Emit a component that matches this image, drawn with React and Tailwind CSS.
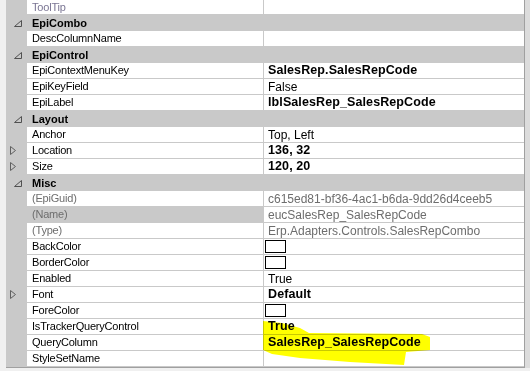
import React from 'react';

// rows of the property grid, top to bottom
const rows = [
  { name: 'ToolTip', value: '', nameClass: 'text-[#7b7694]', first: true },
  { cat: 'EpiCombo' },
  { name: 'DescColumnName', value: '' },
  { cat: 'EpiControl' },
  { name: 'EpiContextMenuKey', value: 'SalesRep.SalesRepCode', bold: true },
  { name: 'EpiKeyField', value: 'False' },
  { name: 'EpiLabel', value: 'lblSalesRep_SalesRepCode', bold: true },
  { cat: 'Layout' },
  { name: 'Anchor', value: 'Top, Left' },
  { name: 'Location', value: '136, 32', bold: true, expand: true },
  { name: 'Size', value: '120, 20', bold: true, expand: true },
  { cat: 'Misc' },
  { name: '(EpiGuid)', value: 'c615ed81-bf36-4ac1-b6da-9dd26d4ceeb5', grey: true },
  { name: '(Name)', value: 'eucSalesRep_SalesRepCode', grey: true, selected: true },
  { name: '(Type)', value: 'Erp.Adapters.Controls.SalesRepCombo', grey: true },
  { name: 'BackColor', swatch: true },
  { name: 'BorderColor', swatch: true },
  { name: 'Enabled', value: 'True' },
  { name: 'Font', value: 'Default', bold: true, expand: true },
  { name: 'ForeColor', swatch: true },
  { name: 'IsTrackerQueryControl', value: 'True', bold: true },
  { name: 'QueryColumn', value: 'SalesRep_SalesRepCode', bold: true },
  { name: 'StyleSetName', value: '' },
];

const Expanded = () => (
  <svg width="8" height="7" viewBox="0 0 8 7" className="ml-[8px]">
    <path d="M0.5 6.5 L7.5 6.5 L7.5 0.5 Z" fill="none" stroke="#505050" strokeWidth="1" />
  </svg>
);

const Collapsed = () => (
  <svg width="6" height="9" viewBox="0 0 6 9" className="ml-[4px]">
    <path d="M0.5 0.5 L5.5 4.5 L0.5 8.5 Z" fill="none" stroke="#606060" strokeWidth="1" />
  </svg>
);

const CategoryRow = ({ label }) => (
  <div className="flex h-[16px] items-center bg-[#c9c9c9]">
    <div className="flex w-[21px] items-center">
      <Expanded />
    </div>
    <span className="pl-[5px] text-[11px] font-bold text-black">{label}</span>
  </div>
);

const PropRow = ({ row }) => {
  const nameColor = row.nameClass || (row.grey ? 'text-[#6d6d6d]' : 'text-black');
  return (
    <div className={`flex ${row.first ? 'h-[15px]' : 'h-[16px]'} border-b border-[#c9c9c9]`}>
      <div className="flex w-[21px] items-center bg-[#c9c9c9]">
        {row.expand && <Collapsed />}
      </div>
      <div
        className={`flex w-[236px] items-center pl-[5px] text-[11px] tracking-[-0.2px] ${nameColor} ${
          row.selected ? 'bg-[#c9c9c9]' : 'bg-white'
        }`}
      >
        {row.name}
      </div>
      <div className="w-px bg-[#c9c9c9]" />
      <div
        className={`flex w-[260px] items-center bg-white pl-[4px] ${
          row.bold
            ? 'text-[12.5px] font-bold tracking-[0.1px] text-black'
            : row.grey
            ? 'text-[12px] text-[#6d6d6d]'
            : 'text-[12px] text-black'
        }`}
      >
        {row.swatch ? (
          <div className="ml-[-3px] h-[13px] w-[21px] border border-black bg-white" />
        ) : (
          row.value
        )}
      </div>
    </div>
  );
};

export default function App() {
  return (
    <div
      className="relative h-[371px] w-[530px] overflow-hidden bg-[#f0f0f0]"
      style={{ fontFamily: '"Liberation Sans", Arial, sans-serif' }}
    >
      <div className="flex">
        <div className="w-[6px]" />
        <div className="w-[519px] border-r border-b border-[#a0a0a0]">
          {rows.map((row, i) =>
            row.cat ? <CategoryRow key={i} label={row.cat} /> : <PropRow key={i} row={row} />
          )}
        </div>
        <div className="w-[5px] bg-[#dcdcdc]" />
      </div>

      {/* yellow highlighter marks */}
      <svg
        className="pointer-events-none absolute left-0 top-0 mix-blend-multiply"
        width="530"
        height="371"
      >
        <path
          d="M263 321 L282 323 L300 328 L309 333 L422 334 L430 337 L430 350 L406 352 L404 365 L350 362 L300 358 L272 354 L263 350 Z"
          fill="#ffff00"
        />
      </svg>
    </div>
  );
}
